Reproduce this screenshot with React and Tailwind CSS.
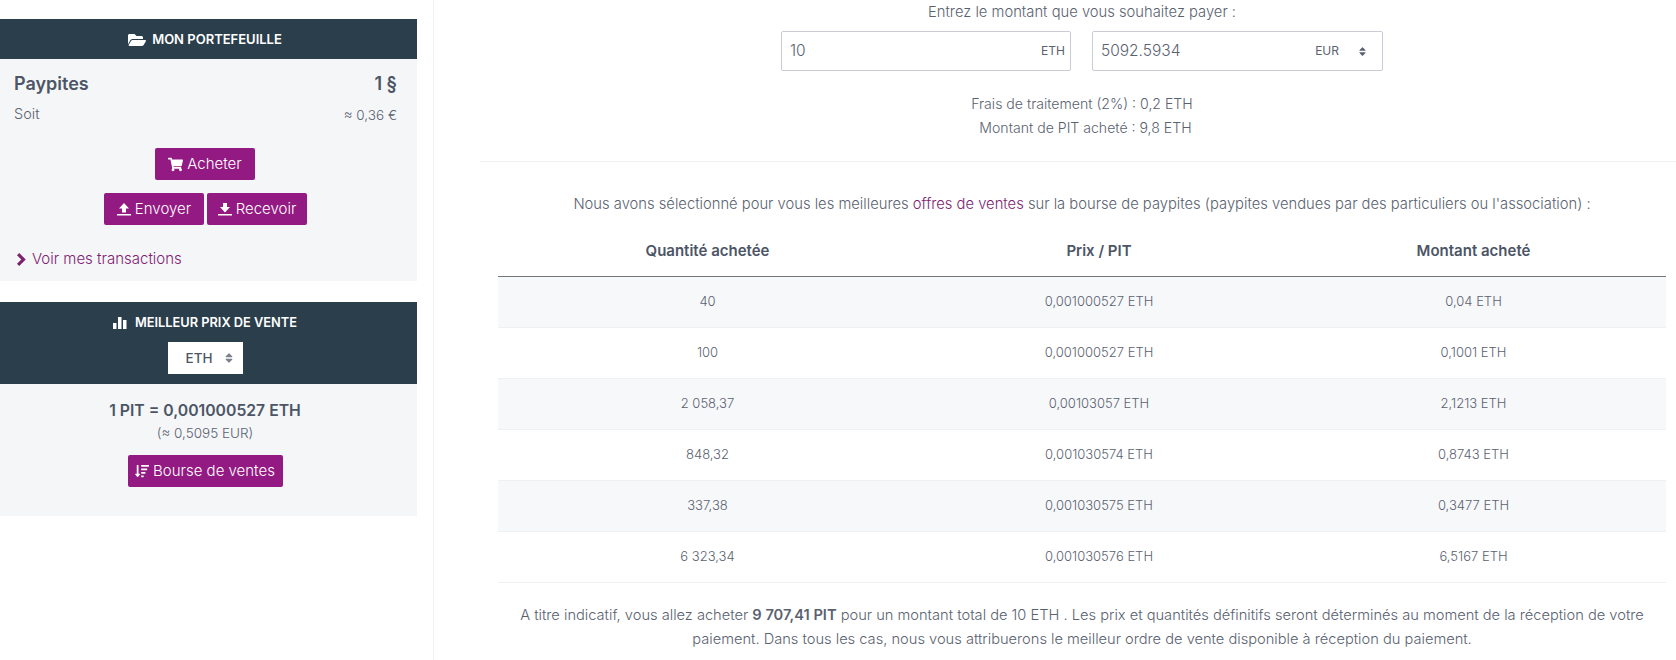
import { FaFolderOpen, FaShoppingCart, FaSort, FaSortAmountDown } from "react-icons/fa";

const rows = [
  ["40", "0,001000527 ETH", "0,04 ETH"],
  ["100", "0,001000527 ETH", "0,1001 ETH"],
  ["2 058,37", "0,00103057 ETH", "2,1213 ETH"],
  ["848,32", "0,001030574 ETH", "0,8743 ETH"],
  ["337,38", "0,001030575 ETH", "0,3477 ETH"],
  ["6 323,34", "0,001030576 ETH", "6,5167 ETH"],
];

function UploadIcon({ down }) {
  return (
    <svg width="14" height="13" viewBox="0 0 14 13" fill="currentColor">
      {down ? <path d="M5 0h4v4h3L7 9.500 2 4h3z" /> : <path d="M7 0l5 5.500H9V9.500H5V5.500H2z" />}
      <rect y="11" width="14" height="1.500" />
    </svg>
  );
}

function BarsIcon() {
  return (
    <svg width="14" height="12" viewBox="0 0 14 12" fill="currentColor">
      <rect y="6" width="3.500" height="6" />
      <rect x="5" width="3.500" height="12" />
      <rect x="10" y="3" width="3.500" height="9" />
    </svg>
  );
}

function ChevronIcon() {
  return (
    <svg width="10" height="13" viewBox="0 0 10 13" fill="currentColor">
      <path d="M0 2.200L2.200 0l6.500 6.500L2.200 13 0 10.800l4.300-4.300z" />
    </svg>
  );
}

function Button({ children, className = "" }) {
  return (
    <button className={`flex h-8 items-center justify-center gap-1 rounded-[2px] bg-[#931a82] text-[15px] font-light text-white ${className}`}>
      {children}
    </button>
  );
}

export default function App() {
  return (
    <div className="flex h-[660px] overflow-hidden bg-white font-['Inter',sans-serif] text-[14.750px] font-light text-[#5a6270]">
      {/* Sidebar */}
      <aside className="w-[434px] shrink-0 border-r border-[#f0f1f3] pt-[19px] pr-4">
        <section className="h-[262px] bg-[#f5f6f8]">
          <h2 className="flex h-10 items-center justify-center gap-1.5 bg-[#2b3e4c] pt-px pr-[7px] text-[13px] font-semibold text-white">
            <FaFolderOpen size={18} />
            MON PORTEFEUILLE
          </h2>
          <div className="pt-[11px] pr-5 pl-3.5">
            <div className="flex items-center justify-between text-[18px] font-semibold text-[#4c5566]">
              <span>Paypites</span>
              <span>1 §</span>
            </div>
            <div className="mt-1.5 flex justify-between">
              <span className="text-[14.500px]">Soit</span>
              <span className="mt-0.5 text-[13.500px]">≈ 0,36 €</span>
            </div>
          </div>
          <div className="mt-[23px] flex justify-center pr-[7px]">
            <Button className="w-[100px]"><FaShoppingCart size={15} />Acheter</Button>
          </div>
          <div className="mt-[13px] flex justify-center gap-[3px] pr-[6px]">
            <Button className="w-[100px]"><UploadIcon />Envoyer</Button>
            <Button className="w-[100px]"><UploadIcon down />Recevoir</Button>
          </div>
          <a className="mt-[23px] flex items-center gap-[5px] pl-[17px] text-[15px] text-[#7e2170]">
            <ChevronIcon />
            Voir mes transactions
          </a>
        </section>

        <section className="mt-[21px] h-[214px] bg-[#f5f6f8]">
          <div className="flex h-[82px] flex-col items-center bg-[#2b3e4c] pt-[13px] pr-[7px]">
            <h2 className="flex items-center gap-2 text-[12.800px] leading-[16px] font-semibold text-white">
              <BarsIcon />
              MEILLEUR PRIX DE VENTE
            </h2>
            <div className="mt-[11px] flex h-8 w-[75px] items-center justify-end gap-2.5 bg-white pr-2 text-[13.500px] font-medium text-[#4c5566]">
              ETH
              <FaSort size={12} className="text-[#7a808c]" />
            </div>
          </div>
          <div className="flex flex-col items-center pt-[15px] pr-[7px]">
            <div className="text-[15.750px] leading-6 font-semibold text-[#4c5566]">1 PIT = 0,001000527 ETH</div>
            <div className="text-[13.500px] leading-[20px]">(≈ 0,5095 EUR)</div>
            <Button className="mt-3 w-[155px]"><FaSortAmountDown size={14} />Bourse de ventes</Button>
          </div>
        </section>
      </aside>

      {/* Main */}
      <main className="min-w-0 flex-1 pl-[46px] text-center">
        <div className="pr-[10px] pl-[18px]">
          <p className="leading-6">Entrez le montant que vous souhaitez payer :</p>
          <div className="mt-[7px] flex justify-center gap-[21px]">
            <div className="flex h-10 w-[290px] items-center justify-between rounded-[2px] border border-[#c9ccd6] pr-[5px] pl-2">
              <span className="text-[15.500px]">10</span>
              <span className="text-[12px] font-normal">ETH</span>
            </div>
            <div className="flex h-10 w-[291px] items-center justify-between rounded-[2px] border border-[#c9ccd6] pr-3.5 pl-2">
              <span className="text-[15.500px]">5092.5934</span>
              <span className="flex items-center gap-[18px] text-[12px] font-normal">EUR<FaSort size={11} /></span>
            </div>
          </div>
          <p className="mt-[21px] text-[14.100px] leading-6">Frais de traitement (2%) : 0,2 ETH</p>
          <p className="pl-[7px] text-[14.100px] leading-6">Montant de PIT acheté : 9,8 ETH</p>
        </div>
        <hr className="mt-[21px] border-[#eef0f2]" />

        <div className="pt-[30px] pr-[10px] pl-[18px]">
          <p className="leading-6">
            Nous avons sélectionné pour vous les meilleures <a className="text-[#7e2170]">offres de ventes</a> sur la bourse de paypites (paypites vendues par des particuliers ou l'association) :
          </p>
          <table className="mt-[14px] w-full table-fixed">
            <colgroup>
              <col className="w-[419px]" />
              <col className="w-[364px]" />
              <col />
            </colgroup>
            <thead>
              <tr className="h-[46px] border-b border-[#73787f] text-[15px] text-[#4c5566]">
                <th className="pb-[3px] font-semibold">Quantité achetée</th>
                <th className="pb-[3px] font-semibold">Prix / PIT</th>
                <th className="pb-[3px] font-semibold">Montant acheté</th>
              </tr>
            </thead>
            <tbody className="text-[13px]">
              {rows.map((row, i) => (
                <tr key={row[0]} className={`h-[51px] border-b border-[#eef0f2] ${i % 2 === 0 ? "bg-[#f7f8fa]" : ""}`}>
                  {row.map((cell) => (
                    <td key={cell} className="pt-px">{cell}</td>
                  ))}
                </tr>
              ))}
            </tbody>
          </table>
          <p className="mt-[20px] text-[14.650px] leading-6">
            A titre indicatif, vous allez acheter <b className="font-semibold">9 707,41 PIT</b> pour un montant total de 10 ETH . Les prix et quantités définitifs seront déterminés au moment de la réception de votre paiement. Dans tous les cas, nous vous attribuerons le meilleur ordre de vente disponible à réception du paiement.
          </p>
        </div>
      </main>
    </div>
  );
}
